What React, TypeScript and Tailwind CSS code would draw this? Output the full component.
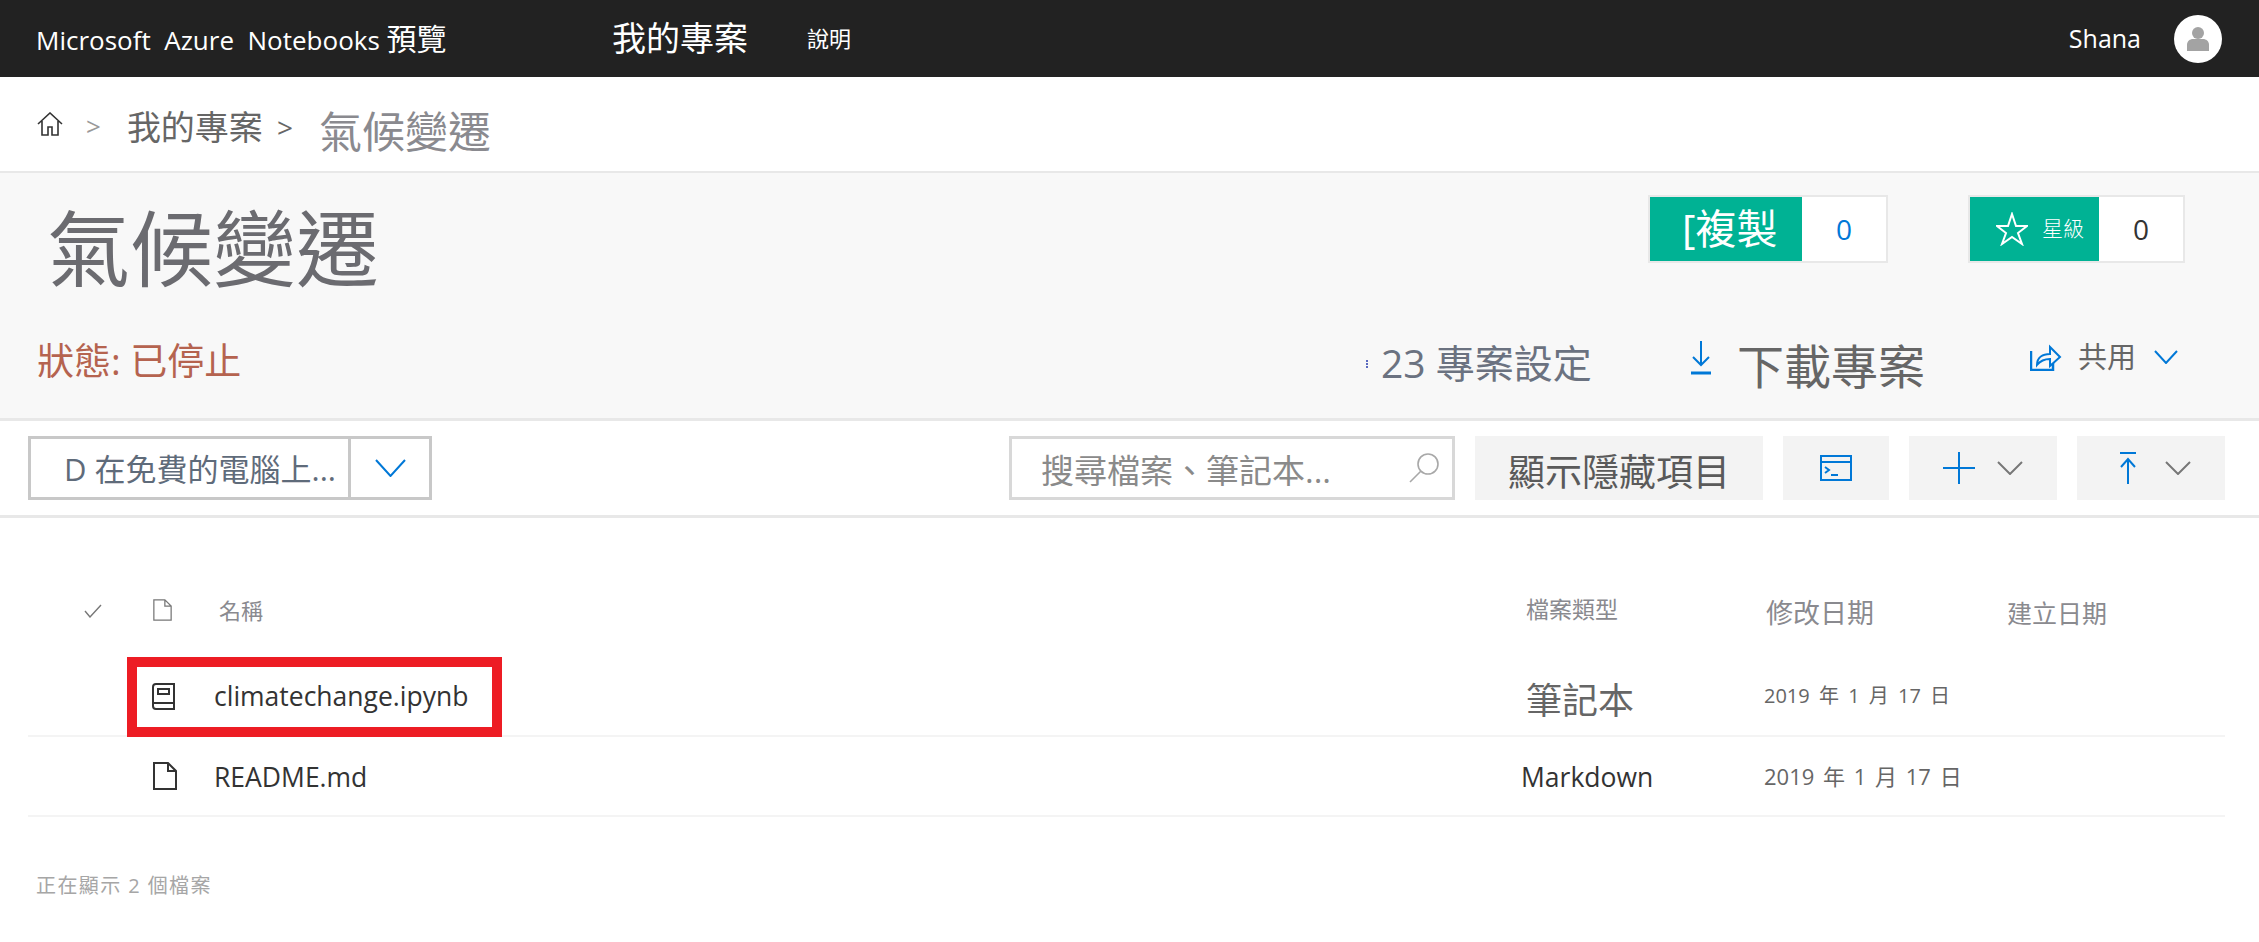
const sans = "font-['Open_Sans','Noto_Sans_CJK_TC',sans-serif]";

function HomeIcon() {
    return (
        <svg width="26" height="24" viewBox="0 0 26 24" fill="none" stroke="#333333" strokeWidth="1.6">
            <path d="M1 12 13 1l12 11M5 9v14h6v-8h4v8h6V9" />
        </svg>
    );
}

function Avatar() {
    return (
        <div className="ml-[33px] w-[48px] h-[48px] rounded-full bg-white flex items-center justify-center">
            <svg width="22" height="24" viewBox="0 0 22 24" fill="#a3a3a3">
                <circle cx="11" cy="6" r="6" />
                <path d="M0 24v-6c0-4 3-6 6-6h10c3 0 6 2 6 6v6z" />
            </svg>
        </div>
    );
}

function Chevron({ w, h, color, sw = 2 }: { w: number; h: number; color: string; sw?: number }) {
    return (
        <svg width={w} height={h} viewBox={`0 0 ${w} ${h}`} fill="none" stroke={color} strokeWidth={sw}>
            <path d={`M1 1 ${w / 2} ${h - 1} ${w - 1} 1`} />
        </svg>
    );
}

function FileIcon({ color, w, h, sw }: { color: string; w: number; h: number; sw: number }) {
    return (
        <svg width={w} height={h} viewBox="0 0 24 28" fill="none" stroke={color} strokeWidth={sw}>
            <path d="M1 1h14l8 8v18H1zM15 1v8h8" />
        </svg>
    );
}

function Header() {
    return (
        <header className="h-[77px] bg-[#222222] flex items-center text-white pl-9 pr-[37px]">
            <div className="w-[576px] text-[26px] whitespace-pre">Microsoft  Azure  Notebooks <span className="text-[30px]">預覽</span></div>
            <div className="w-[195px] text-[34px]">我的專案</div>
            <div className="text-[22px]">說明</div>
            <div className="ml-auto text-[25px]">Shana</div>
            <Avatar />
        </header>
    );
}

function Breadcrumb() {
    return (
        <div className="h-[96px] flex items-center pl-[37px] pt-3 text-[#666666] border-b-[2px] border-[#e8e8e8]">
            <div className="-mt-[12px]"><HomeIcon /></div>
            <span className="ml-[23px] -mt-[8px] text-[#999999] text-[26px]">&gt;</span>
            <span className="ml-[26px] -mt-[6px] text-[34px]">我的專案</span>
            <span className="ml-[14px] -mt-[6px] text-[28px]">&gt;</span>
            <span className="ml-[26px] mt-[4px] text-[43px] text-[#8a8a8f]">氣候變遷</span>
        </div>
    );
}

function Badge({ label, count, countColor, width }: { label: React.ReactNode; count: string; countColor: string; width: string }) {
    return (
        <div className="flex h-[68px] border-[2px] border-[#e8e8e8]">
            <div className={`${width} bg-[#00b294] text-white flex items-center`}>{label}</div>
            <div className={`w-[84px] bg-white text-[28px] flex items-center justify-center ${countColor}`}>{count}</div>
        </div>
    );
}

function ProjectBar() {
    return (
        <section className="h-[248px] bg-[#f8f8f8] border-b-[3px] border-[#e8e8e8] flex">
            <div className="flex-1 flex flex-col pl-[37px]">
                <h1 className="ml-[10px] mt-[20px] text-[83px] leading-[110px] text-[#6b6b70]">氣候變遷</h1>
                <div className="mt-[34px] text-[37px] leading-[48px] text-[#b5634f]">狀態: 已停止</div>
            </div>
            <div className="w-[893px] flex flex-col pr-[74px]">
                <div className="mt-[22px] flex justify-end gap-[80px]">
                    <Badge
                        width="w-[152px]"
                        count="0"
                        countColor="text-[#0078d7]"
                        label={<span className="pl-[32px] text-[41px]">[複製</span>}
                    />
                    <Badge
                        width="w-[129px]"
                        count="0"
                        countColor="text-[#333333]"
                        label={
                            <>
                                <svg className="ml-[26px]" width="32" height="34" viewBox="0 0 32 34" fill="none" stroke="white" strokeWidth="2">
                                    <path d="M16 2l4 12h11l-9 7 4 11-10-7-10 7 4-11-9-7h11z" />
                                </svg>
                                <span className="ml-[14px] text-[21px] font-light">星級</span>
                            </>
                        }
                    />
                </div>
                <div className="mt-[69px] flex items-center text-[#666666]">
                    <span className="w-[3px] h-[8px] border-l-[2px] border-dotted border-[#5b6bc0]" />
                    <span className="ml-[12px] -mt-[2px] w-[310px] text-[39px] leading-[50px] text-[#6b7280] whitespace-nowrap">23 專案設定</span>
                    <svg width="20" height="34" viewBox="0 0 20 34" fill="none" stroke="#0078d7" strokeWidth="2" className="-mt-[12px]">
                        <path d="M10 0v24M2 16l8 8 8-8" />
                        <path d="M0 32h20" strokeWidth="3" />
                    </svg>
                    <span className="ml-[26px] mt-[4px] text-[47px] leading-[60px] whitespace-nowrap">下載專案</span>
                    <svg width="32" height="28" viewBox="0 0 32 28" fill="none" stroke="#0078d7" strokeWidth="2" className="ml-[105px] -mt-[14px]">
                        <path d="M1 8v19h22v-7" strokeWidth="2.5" />
                        <path d="M7 22c0-8 6-11 13-11V4l10 10-10 9v-7c-5 0-9 1-13 6z" />
                    </svg>
                    <span className="ml-[16px] -mt-[14px] text-[29px] whitespace-nowrap">共用</span>
                    <div className="ml-[18px] -mt-[14px]"><Chevron w={24} h={14} color="#0078d7" /></div>
                </div>
            </div>
        </section>
    );
}

function Toolbar() {
    return (
        <div className="h-[97px] border-b-[3px] border-[#e8e8e8] flex items-center pl-7 pr-[34px]">
            <div className="flex h-[64px] w-[404px] border-[3px] border-[#c8c8c8]">
                <div className="flex-1 pl-[33px] pt-[2px] text-[31px] text-[#5f6b7a] flex items-center whitespace-nowrap">D 在免費的電腦上...</div>
                <div className="w-[81px] border-l-[3px] border-[#c8c8c8] flex items-center justify-center">
                    <Chevron w={31} h={18} color="#0078d7" />
                </div>
            </div>
            <div className="ml-auto flex h-[64px] w-[446px] border-[3px] border-[#d8d8d8] items-center pl-[29px] pr-[13px] text-[33px] text-[#8a8a8a]">
                <span className="pt-[6px] whitespace-nowrap">搜尋檔案、筆記本...</span>
                <svg className="ml-auto" width="30" height="30" viewBox="0 0 30 30" fill="none" stroke="#a8a8a8" strokeWidth="1.6">
                    <circle cx="19" cy="11" r="10" />
                    <path d="M12 18 1 29" />
                </svg>
            </div>
            <div className="ml-5 w-[288px] h-[64px] pt-[8px] bg-[#f3f3f3] text-[37px] text-[#5a5a5a] flex items-center justify-center whitespace-nowrap">顯示隱藏項目</div>
            <div className="ml-5 w-[106px] h-[64px] bg-[#f3f3f3] flex items-center justify-center">
                <svg width="32" height="26" viewBox="0 0 32 26" fill="none" stroke="#0078d7" strokeWidth="2">
                    <path d="M1 1h30v24H1zM1 7h30" />
                    <path d="M5 12l4 3-4 3M11 20h7" />
                </svg>
            </div>
            <div className="ml-5 w-[148px] h-[64px] bg-[#f3f3f3] flex items-center pl-[34px]">
                <svg width="32" height="32" viewBox="0 0 32 32" stroke="#0078d7" strokeWidth="2">
                    <path d="M16 0v32M0 16h32" />
                </svg>
                <div className="ml-[22px]"><Chevron w={26} h={14} color="#777777" /></div>
            </div>
            <div className="ml-5 w-[148px] h-[64px] bg-[#f3f3f3] flex items-center pl-[43px]">
                <svg width="16" height="32" viewBox="0 0 16 32" fill="none" stroke="#0078d7" strokeWidth="2">
                    <path d="M0 1h16M8 32V7M1 15l7-8 7 8" />
                </svg>
                <div className="ml-[29px]"><Chevron w={26} h={14} color="#777777" /></div>
            </div>
        </div>
    );
}

function FileList() {
    return (
        <div className="pl-7 pr-[34px]">
            <div className="h-[139px] flex items-center pt-[46px] text-[#8a8a8f]">
                <svg className="ml-[56px]" width="18" height="14" viewBox="0 0 18 14" fill="none" stroke="#777777" strokeWidth="1.4">
                    <path d="M1 7l5 6L17 1" />
                </svg>
                <div className="ml-[51px] -mt-[2px]"><FileIcon color="#777777" w={19} h={22} sw={1.6} /></div>
                <span className="ml-[47px] w-[1307px] text-[22px]">名稱</span>
                <span className="w-[240px] text-[23px] -mt-[2px]">檔案類型</span>
                <span className="w-[241px] mt-[4px] text-[27px] leading-[34px]">修改日期</span>
                <span className="mt-[4px] text-[25px] leading-[34px]">建立日期</span>
            </div>

            <div className="relative h-[80px] border-b-[2px] border-[#f4f4f4] flex items-center text-[#333333]">
                <svg className="ml-[124px]" width="23" height="27" viewBox="0 0 23 27" fill="none" stroke="#333333" strokeWidth="2">
                    <path d="M4 1h18v25H4a3 3 0 0 1-3-3V4a3 3 0 0 1 3-3zM1 20h21" />
                    <path d="M6 6h11v5H6z" />
                </svg>
                <span className="ml-[39px] mt-[2px] w-[1312px] text-[26.5px]">climatechange.ipynb</span>
                <span className="w-[238px] mt-[10px] text-[36px] text-[#666666] leading-[44px]">筆記本</span>
                <span className="text-[20px] text-[#666666] whitespace-nowrap [word-spacing:4px]">2019 年 1 月 17 日</span>
                <div className="absolute left-[99px] top-0 w-[375px] h-[80px] border-[10px] border-[#ed1c24]" />
            </div>

            <div className="h-[80px] border-b-[2px] border-[#f4f4f4] flex items-center text-[#333333]">
                <div className="ml-[125px]"><FileIcon color="#333333" w={24} h={28} sw={2} /></div>
                <span className="ml-[37px] mt-[4px] w-[1306px] text-[26.5px]">README.md</span>
                <span className="w-[244px] mt-[4px] ml-[1px] -mr-[1px] text-[26.5px]">Markdown</span>
                <span className="text-[22px] text-[#666666] whitespace-nowrap [word-spacing:3px]">2019 年 1 月 17 日</span>
            </div>

            <div className="mt-[54px] ml-2 text-[20px] text-[#a6a6a6] tracking-[1.4px]">正在顯示 2 個檔案</div>
        </div>
    );
}

function App() {
    return (
        <div className={`min-h-[942px] bg-white ${sans}`}>
            <Header />
            <Breadcrumb />
            <ProjectBar />
            <Toolbar />
            <FileList />
        </div>
    );
}

export default App;
